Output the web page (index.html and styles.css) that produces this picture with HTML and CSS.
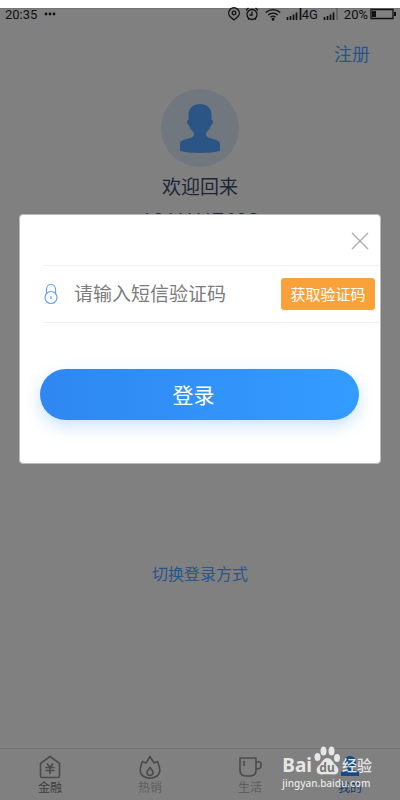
FILE: index.html
```html
<!DOCTYPE html>
<html lang="zh-CN">
<head>
<meta charset="utf-8">
<meta name="viewport" content="width=device-width, initial-scale=1">
<title>登录</title>
<link rel="stylesheet" href="styles.css">
</head>
<body>
<div class="screen">
  <header class="status">
    <span class="time">20:35</span>
    <svg class="dots" width="12" height="4" viewBox="0 0 12 4"><circle cx="2" cy="2" r="1.4"/><circle cx="6" cy="2" r="1.4"/><circle cx="10" cy="2" r="1.4"/></svg>
    <div class="status-right">
      <svg width="14" height="14" viewBox="0 0 14 14" class="line"><path d="M7 13 3 9.5a5.3 5.3 0 1 1 8 0Z"/><circle cx="7" cy="6" r="1.8"/></svg>
      <svg width="14" height="14" viewBox="0 0 14 14" class="line alarm"><circle cx="7" cy="7.5" r="5"/><path d="M7 4.500v3.500H4.500M1 3.500 3.500 1M13 3.500 10.500 1M3 12.500l1-1M11 12.500l-1-1"/></svg>
      <svg width="16" height="14" viewBox="0 0 16 14" class="line wifi"><path d="M.8 5.500a10.500 10.500 0 0 1 14.400 0M3.200 8a7 7 0 0 1 9.600 0M5.500 10.300a3.600 3.600 0 0 1 5 0"/><circle cx="8" cy="12.300" r=".8"/></svg>
      <svg width="16" height="14" viewBox="0 0 16 14" class="line"><path class="bars" d="M1.500 13v-3M4.500 13V9M7.500 13V7.500M10.500 13V5.500M14.500 13V1"/></svg>
      <span>4G</span>
      <svg width="15" height="14" viewBox="0 0 15 14" class="line signal"><path class="bars" d="M1.500 13v-3M4.500 13V9M7.500 13V7.500M10.500 13V5.500"/><path class="faint" d="M14 13V1"/></svg>
      <span>20%</span>
      <svg width="26" height="12" viewBox="0 0 26 12" class="line battery"><path d="M1 1.500h22v9H1z"/><path class="solid" d="M2 3h4v6H2zM24 4h2v4h-2z"/></svg>
    </div>
  </header>
  <main class="page">
    <a class="register" href="#">注册</a>
    <div class="avatar">
      <svg width="40" height="49" viewBox="0 0 40 49"><path d="M20 0C28 0 31.500 5 31.500 11v5c2.500 0 1.500 5-.5 5-1 4-3 6-5 8v2c2 5 14 3 14 9v7c-10 2.500-30 2.500-40 0v-7c0-6 12-4 14-9v-2c-2-2-4-4-5-8-2 0-3-5-.5-5v-5C8.500 5 12 0 20 0Z"/></svg>
    </div>
    <h1 class="welcome">欢迎回来</h1>
    <p class="phone">181****7690</p>
    <a class="switch" href="#">切换登录方式</a>
  </main>
  <nav class="tabs">
    <a class="tab strong" href="#">
      <svg width="22" height="24" viewBox="0 0 22 24"><path d="M1.500 8.500 11 1.500l9.500 7V21q0 1.500-1.500 1.500H3Q1.500 22.500 1.500 21ZM8 8.500l3 4 3-4M6.500 12.500h9M6.500 15.500h9M11 12.500v6.500"/></svg>
      <span>金融</span>
    </a>
    <a class="tab" href="#">
      <svg width="22" height="24" viewBox="0 0 22 24"><path d="M11 1.500 7 8 3.500 6.500C.5 13 0 18 4 21c4 3 10 3 14 0 4-3 3.500-8 .5-14.500L15 8ZM11 12.500c-2 3-3 3.500-3 5a3 3 0 0 0 6 0c0-1.500-1-2-3-5Z"/></svg>
      <span>热销</span>
    </a>
    <a class="tab" href="#">
      <svg width="24" height="24" viewBox="0 0 24 24"><path d="M2 3h16v12q0 6-6 6H8q-6 0-6-6ZM18 7h3q2 0 2 2v2q0 3-5 3M6 6v5"/></svg>
      <span>生活</span>
    </a>
    <a class="tab active" href="#">
      <svg width="20" height="24" viewBox="0 0 20 24"><path d="M10 1c5 0 6 4 6 7 0 3-2 4-3 5v2l6 2v4H1v-4l6-2v-2c-1-1-3-2-3-5 0-3 1-7 6-7Z"/></svg>
      <span>我的</span>
    </a>
  </nav>
</div>

<div class="overlay">
  <form class="dialog" role="dialog" aria-label="短信验证码登录">
    <div class="dialog-top">
      <button class="close" type="button" aria-label="关闭"><svg width="18" height="18" viewBox="0 0 18 18"><path d="m1 1 16 16M17 1 1 17"/></svg></button>
    </div>
    <div class="code-row">
      <svg class="lock" width="14" height="22" viewBox="0 0 14 22"><circle cx="7" cy="14.500" r="6"/><path d="M2.500 10.500V6a4.500 4.500 0 0 1 9 0v4.500M7 13v3"/></svg>
      <input class="code" type="text" aria-label="短信验证码" placeholder="请输入短信验证码">
      <button class="get-code" type="button">获取验证码</button>
    </div>
    <button class="login" type="submit">登录</button>
  </form>
</div>

<div class="watermark">
  <div class="brand">
    <span>Bai</span>
    <svg width="28" height="30" viewBox="0 0 26 30"><ellipse cx="3.500" cy="11" rx="3" ry="4"/><ellipse cx="9.500" cy="5" rx="3" ry="4.500"/><ellipse cx="17.500" cy="5" rx="3" ry="4.500"/><ellipse cx="23" cy="12" rx="3" ry="4"/><path d="M13.500 12c4 0 5 4 8 7 5 4 3 10-2 9.500-4-.5-8-.5-12 0-5 .5-7-6-2-9.500 3-3 4-7 8-7Z"/><text x="13" y="26" text-anchor="middle">du</text></svg>
    <span class="cn">经验</span>
  </div>
  <div class="site">jingyan.baidu.com</div>
</div>
</body>
</html>
```
FILE: styles.css
```css
* { box-sizing: border-box; }
body {
  margin: 0;
  font-family: Roboto, "Noto Sans CJK SC", sans-serif;
  background: linear-gradient(#fff 8px, #757575 8px, #757575 9px, #808080 9px);
  color: #111;
}
a { text-decoration: none; }
button { border: 0; padding: 0; font: inherit; cursor: pointer; }
svg { display: block; flex: none; }
.screen { min-height: 100vh; display: flex; flex-direction: column; }

.status {
  display: flex;
  align-items: center;
  height: 28px;
  padding: 0 4px 0 5px;
  font-size: 13px;
}
.dots { margin-left: 7px; fill: #111; }
.status-right { display: flex; align-items: center; margin-left: auto; }
.line { fill: none; stroke: #111; stroke-width: 1.3; }
.bars { stroke-width: 1.7; }
.alarm { margin-left: 4px; }
.wifi { margin: 0 5px 0 6px; }
.signal { margin: 0 6px 0 5px; }
.battery { margin-left: 2px; }
.faint { stroke: #555; }
.solid { fill: #111; stroke: none; }

.page { flex: 1; display: flex; flex-direction: column; align-items: center; }
.register {
  align-self: flex-end;
  margin: 12px 30px 0 0;
  font-size: 18px;
  line-height: 30px;
  color: #28558a;
}
.avatar {
  display: flex;
  align-items: center;
  justify-content: center;
  width: 78px;
  height: 78px;
  margin-top: 19px;
  border-radius: 50%;
  background: #70777f;
}
.avatar svg { fill: #2b5585; }
.welcome { margin: 7px 0 0; font-size: 19px; line-height: 28px; font-weight: 400; color: #1c2636; }
.phone { margin: 7px 0 0; font-size: 21px; line-height: 24px; color: #16233a; }
.switch { margin-top: 328px; font-size: 16px; line-height: 28px; color: #28558a; }

.tabs { display: flex; height: 52px; border-top: 1px solid #747474; }
.tab {
  flex: 1;
  display: flex;
  flex-direction: column;
  align-items: center;
  padding-top: 6px;
  font-size: 12px;
  line-height: 18px;
  color: #5e5e5e;
}
.tab svg { fill: none; stroke: #4b4b4b; stroke-width: 1.6; stroke-linejoin: round; }
.tab.strong { color: #3c3c3c; }
.tab.active { color: #123b69; }
.tab.active svg { fill: #164b87; stroke: none; }

.overlay { position: absolute; top: 214px; left: 0; right: 0; padding: 0 19px; }
.dialog {
  padding-bottom: 43px;
  border: 1px solid #bbb;
  border-radius: 4px;
  background: #fff;
}
.dialog-top { display: flex; justify-content: flex-end; padding: 17px 11px 15px; }
.close { display: block; background: none; }
.close svg { fill: none; stroke: #aaa; stroke-width: 1.3; }
.code-row {
  display: flex;
  align-items: center;
  height: 58px;
  margin-left: 23px;
  padding-right: 5px;
  border: solid #f2f2f2;
  border-width: 1px 0;
}
.lock { margin-left: 1px; fill: none; stroke: #65a4f5; stroke-width: 1.2; }
.code {
  flex: 1;
  min-width: 0;
  height: 40px;
  margin-left: 16px;
  padding: 0;
  border: 0;
  outline: 0;
  background: none;
  font: inherit;
  font-size: 19px;
}
.code::placeholder { color: #7c7c7c; }
.get-code {
  width: 94px;
  height: 32px;
  padding-bottom: 2px;
  border-radius: 3px;
  background: #faa23a;
  color: #fff;
  font-size: 15px;
}
.login {
  display: block;
  width: calc(100% - 41px);
  height: 51px;
  margin: 46px 21px 0 20px;
  padding: 0 12px 2px 0;
  border-radius: 26px;
  background: linear-gradient(90deg, #2f87f2, #339cff);
  box-shadow: 0 6px 16px rgba(50, 140, 250, .25);
  color: #fff;
  font-size: 21px;
}

.watermark { position: absolute; top: 745px; right: 28px; color: #e6e6e6; pointer-events: none; }
.brand { display: flex; align-items: flex-end; height: 31px; font-family: "Noto Sans", "Noto Sans CJK SC", sans-serif; font-size: 19px; line-height: 22px; font-weight: 700; }
.brand svg { margin: 0 1px; fill: #e6e6e6; }
.brand text { fill: #777; font-size: 12px; }
.brand .cn { font-size: 15px; font-weight: 500; }
.site { font-family: "Noto Sans", sans-serif; font-size: 10px; line-height: 14px; font-weight: 500; }
```
